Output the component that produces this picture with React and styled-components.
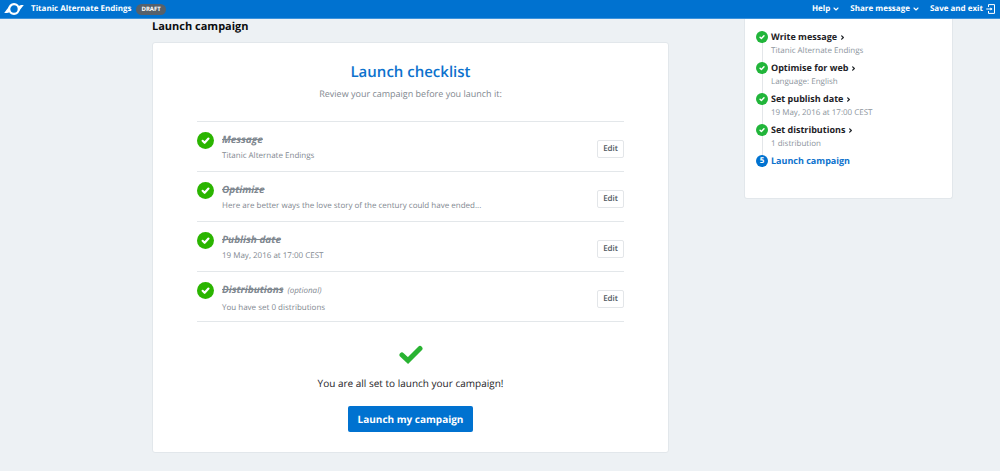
import React from "react";
import styled, { createGlobalStyle } from "styled-components";

const GlobalStyle = createGlobalStyle`
  * {
    box-sizing: border-box;
  }

  body {
    margin: 0;
    background: #edf1f4;
    color: #1e2226;
    font-family: "Open Sans", sans-serif;
    font-size: 8px;
    line-height: 12px;
    text-rendering: geometricPrecision;
  }

  h1, h2, h3, p, ul, ol {
    margin: 0;
    padding: 0;
  }

  button {
    font-family: inherit;
    text-rendering: inherit;
    cursor: pointer;
  }
`;

const TopBar = styled.header`
  display: flex;
  align-items: center;
  justify-content: space-between;
  height: 19px;
  padding: 0 4px;
  background: #0072d0;
  border-bottom: 1px solid #3d93dc;
  color: white;
`;

const Brand = styled.div`
  display: flex;
  align-items: center;
  font-size: 8px;
  font-weight: 700;
`;

const Logo = styled.svg`
  width: 20px;
  height: 14px;
  margin-right: 7px;
`;

const Badge = styled.span`
  margin-left: 5px;
  padding: 0 5px;
  border-radius: 6px;
  background: #56616b;
  font-size: 6px;
  line-height: 11px;
`;

const TopNav = styled.nav`
  display: flex;
  gap: 11px;
`;

const NavButton = styled.button`
  display: flex;
  align-items: center;
  gap: 3px;
  padding: 0;
  border: none;
  background: none;
  color: white;
  font-size: 8px;
  font-weight: 700;
  line-height: 12px;
`;

const Icon = styled.svg`
  flex: none;
  width: ${(props) => props.$size}px;
  height: ${(props) => props.$size}px;
  fill: none;
  stroke: currentColor;
  stroke-linecap: round;
  stroke-linejoin: round;
`;

const Page = styled.div`
  display: grid;
  grid-template-columns: minmax(0, 1fr) 209px;
  gap: 75px;
  align-items: start;
  padding: 0 47px 19px 152px;
`;

const PageTitle = styled.h1`
  font-size: 11px;
  font-weight: 700;
  line-height: 16px;
  color: #0b0d0f;
`;

const Card = styled.section`
  display: flex;
  flex-direction: column;
  align-items: center;
  margin-top: 7px;
  padding: 19px 44px;
  border: 1px solid #e2e7eb;
  border-radius: 3px;
  background: white;
  text-align: center;
`;

const CardTitle = styled.h2`
  font-size: 15px;
  font-weight: 600;
  line-height: 20px;
  color: #0d72cd;
`;

const CardIntro = styled.p`
  margin-top: 5px;
  color: #7f8890;
  font-size: 9px;
  line-height: 14px;
`;

const Checklist = styled.ul`
  align-self: stretch;
  margin-top: 20px;
  border-top: 1px solid #e3e7ea;
  list-style: none;
  text-align: left;
`;

const ChecklistRow = styled.li`
  display: flex;
  align-items: center;
  min-height: 50px;
  padding: 10px 0 6px;
  border-bottom: 1px solid #e3e7ea;
`;

const CheckCircle = styled.span`
  display: flex;
  flex: none;
  align-items: center;
  justify-content: center;
  align-self: flex-start;
  width: ${(props) => props.$size}px;
  height: ${(props) => props.$size}px;
  border-radius: 50%;
  background: ${(props) => props.$color};
  color: white;
  font-size: 8px;
  font-weight: 700;
`;

const RowText = styled.div`
  flex: 1;
  align-self: flex-start;
  margin-left: 8px;
  color: #7f8890;
`;

const RowTitle = styled.h3`
  font-size: 10px;
  font-style: italic;
  font-weight: 700;
  line-height: 14px;
`;

const Optional = styled.em`
  margin-left: 4px;
  font-size: 8px;
  font-weight: 400;
`;

const RowDetail = styled.p`
  margin-top: 4px;
  line-height: 12px;
`;

const EditButton = styled.button`
  padding: 2px 5px;
  border: 1px solid #e3e6e9;
  border-radius: 2px;
  background: white;
  color: #50575d;
  font-size: 8px;
  font-weight: 600;
  line-height: 12px;
`;

const DoneIcon = styled.svg`
  width: 24px;
  height: 19px;
  margin-top: 23px;
`;

const DoneText = styled.p`
  margin-top: 11px;
  font-size: 10px;
  line-height: 16px;
`;

const LaunchButton = styled.button`
  margin: 15px 0 1px;
  padding: 5px 10px;
  border: none;
  border-radius: 2px;
  background: #0072d0;
  color: white;
  font-size: 10px;
  font-weight: 700;
  line-height: 16px;
`;

const Steps = styled.ol`
  padding: 12px 11px 31px;
  border: 1px solid #e2e7eb;
  border-top: none;
  border-radius: 0 0 3px 3px;
  background: white;
  list-style: none;
`;

const Step = styled.li`
  display: flex;
  gap: 3px;
`;

const StepMarker = styled.div`
  display: flex;
  flex-direction: column;
  align-items: center;
`;

const StepLine = styled.div`
  flex: 1;
  width: 1px;
  background: #e3e6e9;
`;

const StepLink = styled.a`
  display: flex;
  align-items: center;
  gap: 3px;
  color: ${(props) => (props.$current ? "#0d72cd" : "#1e2226")};
  font-size: 9px;
  font-weight: 700;
  line-height: 12px;
  text-decoration: none;
`;

const StepDetail = styled.p`
  margin-top: 2px;
  padding-bottom: 5px;
  color: #8b949c;
  line-height: 12px;
`;

const CheckIcon = ({ size }) => (
  <Icon $size={size} viewBox="0 0 10 10" strokeWidth="2.4" aria-hidden="true">
    <path d="M1.8 5.4 4 7.6 8.3 2.8" />
  </Icon>
);

const ChevronDown = () => (
  <Icon $size={6} viewBox="0 0 6 6" strokeWidth="1.1" aria-hidden="true">
    <path d="M1 2 3 4 5 2" />
  </Icon>
);

const ChevronRight = () => (
  <Icon $size={5} viewBox="0 0 6 6" strokeWidth="1.5" aria-hidden="true">
    <path d="M2 1 4 3 2 5" />
  </Icon>
);

const ExitIcon = () => (
  <Icon $size={10} viewBox="0 0 10 10" strokeWidth="1" aria-hidden="true">
    <path d="M2.5 2.6V.6h6v8.8h-6v-2M.6 5h5" />
    <path d="M4.4 3.4 6.6 5 4.4 6.6z" fill="currentColor" stroke="none" />
  </Icon>
);

const checklist = [
  { title: "Message", detail: "Titanic Alternate Endings" },
  {
    title: "Optimize",
    detail: "Here are better ways the love story of the century could have ended...",
  },
  { title: "Publish date", detail: "19 May, 2016 at 17:00 CEST" },
  {
    title: "Distributions",
    detail: "You have set 0 distributions",
    optional: true,
  },
];

const steps = [
  { title: "Write message", detail: "Titanic Alternate Endings" },
  { title: "Optimise for web", detail: "Language: English" },
  { title: "Set publish date", detail: "19 May, 2016 at 17:00 CEST" },
  { title: "Set distributions", detail: "1 distribution" },
];

const App = () => {
  return (
    <>
      <GlobalStyle />
      <TopBar>
        <Brand>
          <Logo viewBox="0 0 20 14" fill="none" stroke="white" aria-hidden="true">
            <circle cx="10" cy="7" r="4.8" strokeWidth="2.2" />
            <path
              d="M.2 10.9C2 8.6 3.6 6.6 5.2 4.6L6.4 9.4C4.6 10.6 2.6 11.4.2 10.9zM19.8 3.1C18 5.4 16.4 7.4 14.8 9.4L13.6 4.6C15.4 3.4 17.4 2.6 19.8 3.1z"
              fill="white"
              stroke="none"
            />
          </Logo>
          Titanic Alternate Endings
          <Badge>DRAFT</Badge>
        </Brand>
        <TopNav>
          <NavButton>
            Help <ChevronDown />
          </NavButton>
          <NavButton>
            Share message <ChevronDown />
          </NavButton>
          <NavButton>
            Save and exit <ExitIcon />
          </NavButton>
        </TopNav>
      </TopBar>
      <Page>
        <main>
          <PageTitle>Launch campaign</PageTitle>
          <Card>
            <CardTitle>Launch checklist</CardTitle>
            <CardIntro>Review your campaign before you launch it:</CardIntro>
            <Checklist>
              {checklist.map((item) => (
                <ChecklistRow key={item.title}>
                  <CheckCircle $size={17} $color="#2bb500">
                    <CheckIcon size={9} />
                  </CheckCircle>
                  <RowText>
                    <RowTitle>
                      <s>{item.title}</s>
                      {item.optional && <Optional>(optional)</Optional>}
                    </RowTitle>
                    <RowDetail>{item.detail}</RowDetail>
                  </RowText>
                  <EditButton>Edit</EditButton>
                </ChecklistRow>
              ))}
            </Checklist>
            <DoneIcon viewBox="0 0 24 19" fill="none" aria-hidden="true">
              <path
                d="M3 10 9 15.5 21 3.5"
                stroke="#29b332"
                strokeWidth="5"
                strokeLinecap="round"
              />
            </DoneIcon>
            <DoneText>You are all set to launch your campaign!</DoneText>
            <LaunchButton>Launch my campaign</LaunchButton>
          </Card>
        </main>
        <aside>
          <Steps>
            {steps.map((step) => (
              <Step key={step.title}>
                <StepMarker>
                  <CheckCircle $size={12} $color="#21b53a">
                    <CheckIcon size={6} />
                  </CheckCircle>
                  <StepLine />
                </StepMarker>
                <div>
                  <StepLink href="#">
                    {step.title} <ChevronRight />
                  </StepLink>
                  <StepDetail>{step.detail}</StepDetail>
                </div>
              </Step>
            ))}
            <Step>
              <CheckCircle $size={12} $color="#0072d0">
                5
              </CheckCircle>
              <StepLink href="#" $current>
                Launch campaign
              </StepLink>
            </Step>
          </Steps>
        </aside>
      </Page>
    </>
  );
};

export default App;
